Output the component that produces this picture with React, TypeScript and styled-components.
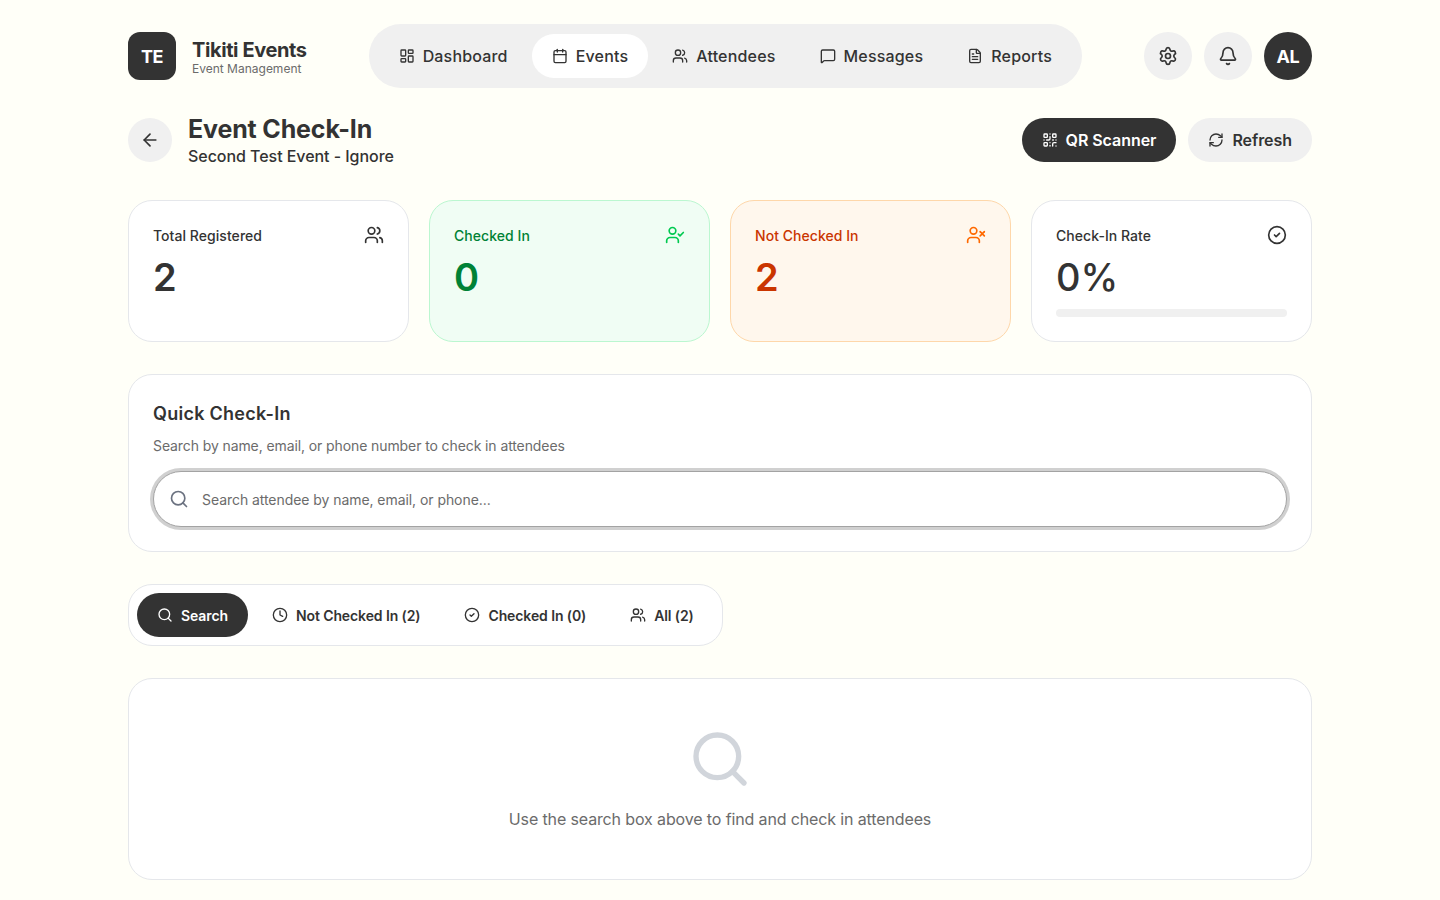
import React from 'react';
import styled, { createGlobalStyle } from 'styled-components';
import {
  ArrowLeft,
  Bell,
  Calendar,
  CircleCheck,
  Clock,
  FileText,
  LayoutDashboard,
  MessageSquare,
  QrCode,
  RefreshCw,
  Search,
  Settings,
  UserCheck,
  UserX,
  Users,
} from 'lucide-react';

const GlobalStyle = createGlobalStyle`
  * { box-sizing: border-box; }
  html, body { margin: 0; padding: 0; }
  body {
    background: #fffff8;
    color: #333333;
    font-family: Inter, "Liberation Sans", sans-serif;
  }
`;

const Page = styled.div`
  width: 1184px;
  margin: 0 auto;
  padding: 24px 0 20px;
  display: flex;
  flex-direction: column;
`;

const Header = styled.header`
  display: flex;
  align-items: center;
  justify-content: space-between;
  height: 64px;
`;

const Brand = styled.div`
  display: flex;
  align-items: center;
  gap: 16px;
`;

const LogoMark = styled.div`
  width: 48px;
  height: 48px;
  border-radius: 12px;
  background: #333333;
  color: #ffffff;
  font-size: 18px;
  font-weight: 700;
  letter-spacing: -0.5px;
  display: flex;
  align-items: center;
  justify-content: center;
`;

const BrandText = styled.div`
  display: flex;
  flex-direction: column;
  padding-top: 2px;
`;

const BrandName = styled.div`
  font-size: 20px;
  line-height: 24px;
  font-weight: 700;
  letter-spacing: -0.4px;
`;

const BrandSub = styled.div`
  font-size: 12px;
  line-height: 14px;
  color: #6b6b6b;
`;

const Nav = styled.nav`
  display: flex;
  align-items: center;
  gap: 4px;
  height: 64px;
  padding: 0 10px;
  border-radius: 32px;
  background: #f0f0f0;
`;

const NavItem = styled.a<{ $active?: boolean }>`
  display: flex;
  align-items: center;
  gap: 8px;
  height: 44px;
  padding: 0 20px;
  border-radius: 22px;
  font-size: 16px;
  font-weight: 500;
  letter-spacing: 0.18px;
  color: #333333;
  background: ${(props) => (props.$active ? '#ffffff' : 'transparent')};
`;

const HeaderActions = styled.div`
  display: flex;
  align-items: center;
  gap: 12px;
`;

const RoundButton = styled.button`
  width: 48px;
  height: 48px;
  border: 0;
  border-radius: 50%;
  background: #f0f0f0;
  color: #333333;
  padding: 0;
  display: flex;
  align-items: center;
  justify-content: center;
`;

const Avatar = styled.div`
  width: 48px;
  height: 48px;
  border-radius: 50%;
  background: #333333;
  color: #ffffff;
  font-size: 18px;
  font-weight: 700;
  letter-spacing: -0.4px;
  display: flex;
  align-items: center;
  justify-content: center;
`;

const TitleRow = styled.div`
  display: flex;
  align-items: center;
  justify-content: space-between;
  margin-top: 30px;
  height: 44px;
`;

const TitleLeft = styled.div`
  display: flex;
  align-items: center;
  gap: 16px;
`;

const BackButton = styled.button`
  width: 44px;
  height: 44px;
  border: 0;
  border-radius: 50%;
  background: #f0f0f0;
  color: #333333;
  padding: 0;
  display: flex;
  align-items: center;
  justify-content: center;
`;

const TitleText = styled.div`
  padding-top: 4px;
`;

const PageTitle = styled.h1`
  margin: 0 0 2px;
  font-size: 25px;
  line-height: 26px;
  font-weight: 700;
  letter-spacing: -0.15px;
`;

const PageSub = styled.div`
  font-size: 16px;
  line-height: 24px;
  font-weight: 500;
  letter-spacing: -0.05px;
`;

const TitleActions = styled.div`
  display: flex;
  gap: 12px;
`;

const PillButton = styled.button<{ $dark?: boolean }>`
  display: flex;
  align-items: center;
  gap: 8px;
  height: 44px;
  padding: 0 20px;
  border: 0;
  border-radius: 22px;
  font-family: inherit;
  font-size: 16px;
  font-weight: 600;
  letter-spacing: -0.05px;
  background: ${(props) => (props.$dark ? '#333333' : '#f0f0f0')};
  color: ${(props) => (props.$dark ? '#ffffff' : '#333333')};
`;

const StatGrid = styled.div`
  display: grid;
  grid-template-columns: repeat(4, 1fr);
  gap: 20px;
  margin-top: 38px;
`;

type Tone = 'plain' | 'green' | 'orange';

const toneBg: Record<Tone, string> = { plain: '#ffffff', green: '#f0fdf4', orange: '#fff7ed' };
const toneBorder: Record<Tone, string> = { plain: '#e5e7eb', green: '#bbf7d0', orange: '#fed7aa' };
const toneLabel: Record<Tone, string> = { plain: '#333333', green: '#008236', orange: '#ca3500' };
const toneIcon: Record<Tone, string> = { plain: '#333333', green: '#00c950', orange: '#ff6900' };

const StatCard = styled.div<{ $tone: Tone }>`
  height: 142px;
  padding: 24px;
  border-radius: 24px;
  border: 1px solid ${(props) => toneBorder[props.$tone]};
  background: ${(props) => toneBg[props.$tone]};
`;

const StatTop = styled.div`
  display: flex;
  align-items: flex-start;
  justify-content: space-between;
  height: 20px;
`;

const StatLabel = styled.div<{ $tone: Tone }>`
  font-size: 14px;
  line-height: 22px;
  font-weight: 500;
  letter-spacing: 0.05px;
  color: ${(props) => toneLabel[props.$tone]};
`;

const StatIcon = styled.div<{ $tone: Tone }>`
  display: flex;
  color: ${(props) => toneIcon[props.$tone]};
`;

const StatValue = styled.div<{ $tone: Tone }>`
  margin-top: 8px;
  font-size: 38px;
  line-height: 48px;
  font-weight: 600;
  color: ${(props) => toneLabel[props.$tone]};
`;

const RateValue = styled(StatValue)`
  font-weight: 500;
`;

const ProgressTrack = styled.div`
  margin-top: 8px;
  height: 8px;
  border-radius: 4px;
  background: #f0f0f0;
`;

const Panel = styled.section`
  margin-top: 32px;
  padding: 24px;
  height: 178px;
  border-radius: 24px;
  border: 1px solid #e5e7eb;
  background: #ffffff;
`;

const PanelTitle = styled.h2`
  margin: 0;
  font-size: 18px;
  line-height: 30px;
  font-weight: 600;
  letter-spacing: 0.27px;
`;

const PanelText = styled.p`
  margin: 7px 0 0;
  font-size: 14px;
  line-height: 20px;
  letter-spacing: -0.1px;
  color: #6b6b6b;
`;

const SearchField = styled.div`
  display: flex;
  align-items: center;
  gap: 11px;
  height: 56px;
  margin-top: 15px;
  padding: 0 15px;
  border: 1px solid #a3a3a3;
  border-radius: 28px;
  background: #ffffff;
  box-shadow: 0 0 0 3px #d0d0d0;
  color: #6b7280;
`;

const SearchInput = styled.input`
  flex: 1;
  border: 0;
  outline: 0;
  background: transparent;
  font-family: inherit;
  font-size: 14px;
  letter-spacing: -0.06px;
  color: #333333;

  &::placeholder {
    color: #6b6b6b;
    opacity: 1;
  }
`;

const Tabs = styled.div`
  align-self: flex-start;
  display: flex;
  align-items: center;
  gap: 4px;
  margin-top: 32px;
  height: 62px;
  padding: 0 8px;
  border-radius: 24px;
  border: 1px solid #e5e7eb;
  background: #ffffff;
`;

const Tab = styled.button<{ $active?: boolean }>`
  display: flex;
  align-items: center;
  gap: 8px;
  height: 44px;
  padding: 0 20px;
  border: 0;
  border-radius: 22px;
  font-family: inherit;
  font-size: 14px;
  font-weight: 600;
  letter-spacing: -0.1px;
  background: ${(props) => (props.$active ? '#333333' : 'transparent')};
  color: ${(props) => (props.$active ? '#ffffff' : '#333333')};
`;

const EmptyPanel = styled.section`
  margin-top: 32px;
  height: 202px;
  padding-top: 48px;
  border-radius: 24px;
  border: 1px solid #e5e7eb;
  background: #ffffff;
  display: flex;
  flex-direction: column;
  align-items: center;
  color: #d1d5db;
`;

const EmptyText = styled.p`
  margin: 16px 0 0;
  font-size: 16px;
  line-height: 24px;
  letter-spacing: -0.13px;
  color: #6b6b6b;
`;

const navItems = [
  { label: 'Dashboard', icon: LayoutDashboard },
  { label: 'Events', icon: Calendar, active: true },
  { label: 'Attendees', icon: Users },
  { label: 'Messages', icon: MessageSquare },
  { label: 'Reports', icon: FileText },
];

const tabs = [
  { label: 'Search', icon: Search, active: true },
  { label: 'Not Checked In (2)', icon: Clock },
  { label: 'Checked In (0)', icon: CircleCheck },
  { label: 'All (2)', icon: Users },
];

const App: React.FC = () => {
  return (
    <Page>
      <GlobalStyle />
      <Header>
        <Brand>
          <LogoMark>TE</LogoMark>
          <BrandText>
            <BrandName>Tikiti Events</BrandName>
            <BrandSub>Event Management</BrandSub>
          </BrandText>
        </Brand>
        <Nav>
          {navItems.map(({ label, icon: Icon, active }) => (
            <NavItem key={label} $active={active}>
              <Icon size={16} />
              {label}
            </NavItem>
          ))}
        </Nav>
        <HeaderActions>
          <RoundButton aria-label="Settings">
            <Settings size={20} />
          </RoundButton>
          <RoundButton aria-label="Notifications">
            <Bell size={20} />
          </RoundButton>
          <Avatar>AL</Avatar>
        </HeaderActions>
      </Header>

      <TitleRow>
        <TitleLeft>
          <BackButton aria-label="Back">
            <ArrowLeft size={20} />
          </BackButton>
          <TitleText>
            <PageTitle>Event Check-In</PageTitle>
            <PageSub>Second Test Event - Ignore</PageSub>
          </TitleText>
        </TitleLeft>
        <TitleActions>
          <PillButton $dark>
            <QrCode size={16} />
            QR Scanner
          </PillButton>
          <PillButton>
            <RefreshCw size={16} />
            Refresh
          </PillButton>
        </TitleActions>
      </TitleRow>

      <StatGrid>
        <StatCard $tone="plain">
          <StatTop>
            <StatLabel $tone="plain">Total Registered</StatLabel>
            <StatIcon $tone="plain"><Users size={20} /></StatIcon>
          </StatTop>
          <StatValue $tone="plain">2</StatValue>
        </StatCard>
        <StatCard $tone="green">
          <StatTop>
            <StatLabel $tone="green">Checked In</StatLabel>
            <StatIcon $tone="green"><UserCheck size={20} /></StatIcon>
          </StatTop>
          <StatValue $tone="green">0</StatValue>
        </StatCard>
        <StatCard $tone="orange">
          <StatTop>
            <StatLabel $tone="orange">Not Checked In</StatLabel>
            <StatIcon $tone="orange"><UserX size={20} /></StatIcon>
          </StatTop>
          <StatValue $tone="orange">2</StatValue>
        </StatCard>
        <StatCard $tone="plain">
          <StatTop>
            <StatLabel $tone="plain">Check-In Rate</StatLabel>
            <StatIcon $tone="plain"><CircleCheck size={20} /></StatIcon>
          </StatTop>
          <RateValue $tone="plain">0%</RateValue>
          <ProgressTrack />
        </StatCard>
      </StatGrid>

      <Panel>
        <PanelTitle>Quick Check-In</PanelTitle>
        <PanelText>Search by name, email, or phone number to check in attendees</PanelText>
        <SearchField>
          <Search size={20} />
          <SearchInput placeholder="Search attendee by name, email, or phone..." />
        </SearchField>
      </Panel>

      <Tabs>
        {tabs.map(({ label, icon: Icon, active }) => (
          <Tab key={label} $active={active}>
            <Icon size={16} />
            {label}
          </Tab>
        ))}
      </Tabs>

      <EmptyPanel>
        <Search size={64} />
        <EmptyText>Use the search box above to find and check in attendees</EmptyText>
      </EmptyPanel>
    </Page>
  );
};

export default App;
